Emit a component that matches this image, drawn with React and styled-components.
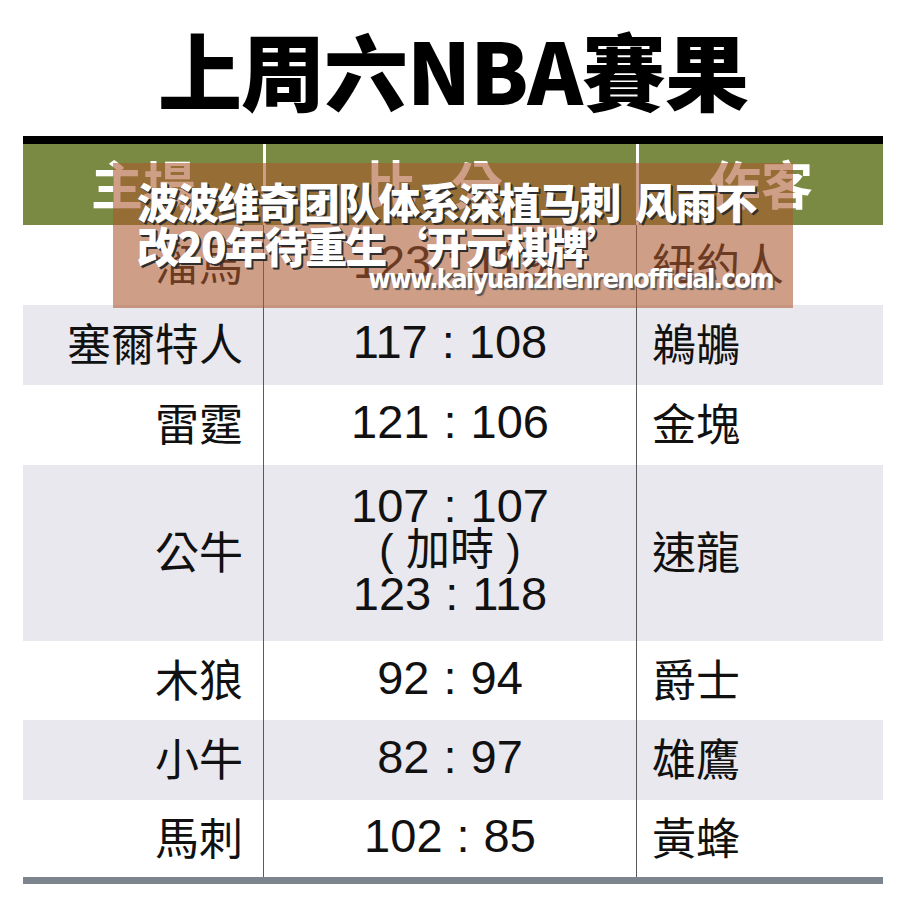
import React from "react";
import styled, { createGlobalStyle } from "styled-components";

const GlobalStyle = createGlobalStyle`
  html, body {
    margin: 0;
    padding: 0;
    background: #ffffff;
  }
  body {
    font-family: "Noto Sans CJK TC", "Noto Sans", sans-serif;
  }
`;

const Page = styled.div`
  position: relative;
  width: 906px;
  height: 910px;
  background: #ffffff;
  overflow: hidden;
`;

const TitleBar = styled.div`
  height: 136px;
  display: flex;
  align-items: center;
  justify-content: center;
`;

const Title = styled.h1`
  margin: 0;
  padding-top: 2px;
  font-family: "Noto Sans CJK TC", sans-serif;
  font-weight: 900;
  font-size: 84px;
  line-height: 1;
  color: #000;
  letter-spacing: -1px;
`;

const Table = styled.div`
  margin: 0 23px;
  border-top: 8px solid #000;
  border-bottom: 7px solid #7c858e;
`;

const Row = styled.div`
  display: grid;
  grid-template-columns: 240px 373px 247px;
  height: ${(p) => p.$h}px;
  background: ${(p) => (p.$shade ? "#e9e8ee" : "#ffffff")};
`;

const HeadRow = styled(Row)`
  background: #7b8a42;
`;

const HeadCell = styled.div`
  display: flex;
  align-items: center;
  justify-content: center;
  font-family: "Noto Sans CJK TC", sans-serif;
  font-weight: 700;
  font-size: 52px;
  color: #ffffff;
  letter-spacing: ${(p) => p.$gap || 0}px;
  border-left: ${(p) => (p.$first ? "none" : "3px solid #ffffff")};
  padding-bottom: 4px;
`;

const Cell = styled.div`
  display: flex;
  align-items: center;
  justify-content: ${(p) => p.$align};
  padding: ${(p) =>
    p.$align === "flex-end" ? "0 20px 6px 0" : p.$align === "flex-start" ? "0 0 6px 15px" : "0 0 6px 0"};
  font-family: "Noto Sans CJK TC", sans-serif;
  font-size: 44px;
  color: #111;
  border-left: ${(p) => (p.$first ? "none" : "1px solid #5a5a5a")};
`;

const Score = styled.div`
  font-family: "Liberation Sans", "Noto Sans CJK TC", sans-serif;
  font-size: 47px;
  line-height: 44px;
  color: #111;
  text-align: center;
  white-space: pre;
`;

const Colon = styled.span`
  margin: 0 14px;
`;

const Note = styled.div`
  font-size: 44px;
`;

const Overlay = styled.div`
  position: absolute;
  left: 113px;
  top: 163px;
  width: 680px;
  height: 145px;
  background: rgba(172, 88, 46, 0.58);
  box-sizing: border-box;
  padding: 16px 20px 0 24px;
  display: flex;
  flex-direction: column;
`;

const Headline = styled.div`
  font-family: "Noto Sans CJK SC", sans-serif;
  font-weight: 900;
  font-size: 42px;
  line-height: 44px;
  letter-spacing: -1.8px;
  color: #ffffff;
  text-shadow: 2px 2px 0 #2e2e2e, 1px 1px 0 #2e2e2e;
  white-space: pre;
`;

const Url = styled.div`
  align-self: flex-end;
  margin-top: -4px;
  font-family: "DejaVu Sans Condensed", "DejaVu Sans", sans-serif;
  font-weight: 700;
  font-size: 27px;
  letter-spacing: -1.6px;
  color: #ffffff;
  text-shadow: 2px 2px 1px #5a5a5a;
`;

const rows = [
  { home: "溜馬", score: ["123", "119"], away: "紐約人", h: 80 },
  { home: "塞爾特人", score: ["117", "108"], away: "鵜鶘", h: 80, shade: true },
  { home: "雷霆", score: ["121", "106"], away: "金塊", h: 80 },
  { home: "公牛", ot: true, away: "速龍", h: 176, shade: true },
  { home: "木狼", score: ["92", "94"], away: "爵士", h: 79 },
  { home: "小牛", score: ["82", "97"], away: "雄鷹", h: 80, shade: true },
  { home: "馬刺", score: ["102", "85"], away: "黃蜂", h: 77 },
];

const ScoreLine = ({ a, b }) => (
  <div>
    {a}
    <Colon>:</Colon>
    {b}
  </div>
);

export default function App() {
  return (
    <Page>
      <GlobalStyle />
      <TitleBar>
        <Title>上周六NBA賽果</Title>
      </TitleBar>
      <Table>
        <HeadRow $h={81}>
          <HeadCell $first>主場</HeadCell>
          <HeadCell $gap={34}>比分</HeadCell>
          <HeadCell>作客</HeadCell>
        </HeadRow>
        {rows.map((r) => (
          <Row key={r.home} $h={r.h} $shade={r.shade}>
            <Cell $first $align="flex-end">{r.home}</Cell>
            <Cell $align="center">
              <Score>
                {r.ot ? (
                  <>
                    <ScoreLine a="107" b="107" />
                    <Note>{"( 加時 )"}</Note>
                    <ScoreLine a="123" b="118" />
                  </>
                ) : (
                  <ScoreLine a={r.score[0]} b={r.score[1]} />
                )}
              </Score>
            </Cell>
            <Cell $align="flex-start">{r.away}</Cell>
          </Row>
        ))}
      </Table>
      <Overlay>
        <Headline>{"波波维奇团队体系深植马刺  风雨不\n改20年待重生‘开元棋牌’"}</Headline>
        <Url>www.kaiyuanzhenrenofficial.com</Url>
      </Overlay>
    </Page>
  );
}
